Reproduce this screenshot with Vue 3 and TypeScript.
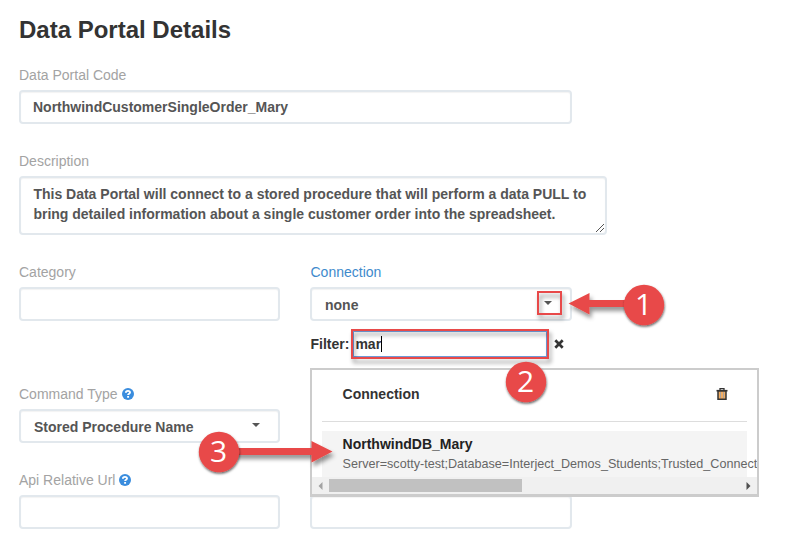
<script setup lang="ts">
import { ref } from 'vue'

interface Connection {
  name: string
  details: string
}

interface Marker {
  label: string
  x: number
  y: number
}

const code = ref('NorthwindCustomerSingleOrder_Mary')
const description = [
  'This Data Portal will connect to a stored procedure that will perform a data PULL to',
  'bring detailed information about a single customer order into the spreadsheet.',
]
const filter = ref('mar')
const connections: Connection[] = [
  {
    name: 'NorthwindDB_Mary',
    details: 'Server=scotty-test;Database=Interject_Demos_Students;Trusted_Connect',
  },
]
const markers: Marker[] = [
  { label: '1', x: 644, y: 305 },
  { label: '2', x: 526, y: 382 },
  { label: '3', x: 219, y: 452 },
]
</script>

<template>
  <main class="page">
    <h1 class="title">Data Portal Details</h1>

    <section class="field code-field">
      <div class="label">Data Portal Code</div>
      <div class="box code-text">{{ code }}</div>
    </section>

    <section class="field description-field">
      <div class="label">Description</div>
      <div class="box area">
        <div v-for="line in description" :key="line" class="line">{{ line }}</div>
        <svg class="grip" width="9" height="9" viewBox="0 0 9 9" shape-rendering="crispEdges">
          <g fill="#555">
            <rect v-for="n in 8" :key="'a' + n" :x="n - 1" :y="8 - n" width="1" height="1" />
            <rect v-for="n in 4" :key="'b' + n" :x="n + 3" :y="8 - n" width="1" height="1" />
          </g>
        </svg>
      </div>
    </section>

    <div class="columns">
      <div class="column left">
        <section class="field category">
          <div class="label">Category</div>
          <div class="box"></div>
        </section>
        <section class="field command">
          <div class="label">
            Command Type
            <svg class="help" viewBox="0 0 12 12"><circle cx="6" cy="6" r="6" fill="#3a8dde" /><path d="M3.900 4.700C3.900 3.300 4.900 2.900 6 2.900S8 3.500 8 4.500C8 5.800 6.100 5.600 6.100 7.100M6.100 8v1.800" fill="none" stroke="#fff" stroke-width="1.900" /></svg>
          </div>
          <div class="box select"><span>Stored Procedure Name</span><i class="caret"></i></div>
        </section>
        <section class="field">
          <div class="label">
            Api Relative Url
            <svg class="help" viewBox="0 0 12 12"><circle cx="6" cy="6" r="6" fill="#3a8dde" /><path d="M3.900 4.700C3.900 3.300 4.900 2.900 6 2.900S8 3.500 8 4.500C8 5.800 6.100 5.600 6.100 7.100M6.100 8v1.800" fill="none" stroke="#fff" stroke-width="1.900" /></svg>
          </div>
          <div class="box"></div>
        </section>
      </div>

      <div class="column right">
        <section class="field">
          <div class="label link">Connection</div>
          <div class="box select"><span>none</span><i class="caret"></i></div>
        </section>
        <div class="filter">
          <span>Filter:</span>
          <div class="filter-input">{{ filter }}<i class="cursor"></i></div>
          <svg class="clear" width="10" height="10" viewBox="0 0 10 10"><path d="M1.300 1.300L8.700 8.700M8.700 1.300L1.300 8.700" stroke="#333" stroke-width="2.700" /></svg>
        </div>
        <div class="box under"></div>

        <div class="popup">
          <div class="popup-head">
            <span>Connection</span>
            <svg width="12" height="12" viewBox="0 0 12 12">
              <path d="M4 2V.7h4V2" fill="none" stroke="#333" stroke-width="1.300" />
              <path d="M.5 1.900h11v1.600H.5z" fill="#333" />
              <path d="M2 3h8v8.200H2z" fill="#f1ad63" stroke="#333" stroke-width="1.500" />
              <path d="M4.500 4v6M7.500 4v6" stroke="#9aa0a8" stroke-width=".8" />
            </svg>
          </div>
          <div v-for="item in connections" :key="item.name" class="option">
            <div class="option-name">{{ item.name }}</div>
            <div class="option-details">{{ item.details }}</div>
          </div>
          <div class="scrollbar">
            <svg width="5" height="8" viewBox="0 0 5 8"><path d="M4.500 0v8L.5 4z" fill="#a3a3a3" /></svg>
            <div class="track"><div class="thumb"></div></div>
            <svg width="5" height="8" viewBox="0 0 5 8"><path d="M.5 0v8l4-4z" fill="#505050" /></svg>
          </div>
        </div>
      </div>
    </div>

    <svg class="callouts" width="791" height="552" viewBox="0 0 791 552">
      <defs>
        <filter id="soft" filterUnits="userSpaceOnUse" x="0" y="0" width="791" height="552">
          <feDropShadow dx="2" dy="4" stdDeviation="2" flood-color="#000" flood-opacity=".42" />
        </filter>
        <filter id="disc" filterUnits="userSpaceOnUse" x="0" y="0" width="791" height="552">
          <feDropShadow dx="0.5" dy="1.500" stdDeviation="1.200" flood-color="#000" flood-opacity=".6" />
        </filter>
      </defs>
      <g filter="url(#soft)">
        <rect x="538" y="292" width="23" height="22" fill="none" stroke="#e84a48" stroke-width="2" />
        <rect x="352" y="330" width="196" height="28" fill="none" stroke="#e84a48" stroke-width="2" />
        <path d="M568.500 303.500l21-10.500v7h40v7h-40v7.500z" fill="#e84a48" />
        <path d="M332.500 451.500l-21-10.500v7h-80v7h80v7.500z" fill="#e84a48" />
      </g>
      <g v-for="marker in markers" :key="marker.label">
        <circle :cx="marker.x" :cy="marker.y" r="20.200" fill="#e84a48" filter="url(#disc)" />
        <text :x="marker.x - 0.5" :y="marker.y + 10.200" class="number">{{ marker.label }}</text>
      </g>
    </svg>
  </main>
</template>

<style>
body {
  background: #fff;
}
</style>

<style scoped>
.page {
  position: relative;
  box-sizing: border-box;
  width: 791px;
  height: 552px;
  padding: 15px 19px 0;
  overflow: hidden;
  background: #fff;
  color: #333;
  font: 14px/20px "Liberation Sans", Arial, sans-serif;
}
.title {
  margin: 0 0 20px;
  font-size: 24px;
  line-height: 30px;
  font-weight: bold;
}
.label {
  display: flex;
  align-items: center;
  gap: 4px;
  height: 20px;
  margin-bottom: 5px;
  color: #a3a3a3;
}
.link {
  color: #3e8acc;
}
.right .link {
  padding-left: 0.5px;
}
.help {
  width: 12px;
  height: 12px;
}
.box {
  box-sizing: border-box;
  height: 34px;
  padding: 5px 12px;
  border: 2px solid #e2e8ed;
  border-radius: 4px;
  background: #fff;
  color: #555;
  font-weight: bold;
  white-space: nowrap;
  box-shadow: inset 0 1px 1px rgba(0, 0, 0, 0.05);
}
.code-field {
  width: 553px;
  margin-bottom: 27px;
}
.description-field {
  width: 588px;
  margin-bottom: 27px;
}
.area {
  position: relative;
  height: 59px;
  padding-top: 6px;
}
.line {
  padding-left: 0.4px;
}
.grip {
  position: absolute;
  right: 0;
  bottom: 0;
}
.columns {
  display: grid;
  grid-template-columns: 261px 262px;
  gap: 30px;
}
.category {
  margin-bottom: 63px;
}
.command {
  margin-bottom: 27px;
}
.select {
  display: flex;
  justify-content: space-between;
  padding: 6px 18px 4px 13px;
}
.caret {
  width: 0;
  height: 0;
  margin-top: 6px;
  border: 4px solid transparent;
  border-top-color: #555;
  border-bottom: 0;
}
.right {
  position: relative;
}
.filter {
  display: flex;
  align-items: center;
  height: 30px;
  margin-top: 8px;
  padding-left: 0.5px;
  font-weight: bold;
}
.filter-input {
  display: flex;
  align-items: center;
  box-sizing: border-box;
  width: 194px;
  height: 26px;
  margin: 0 7px 0 3.500px;
  padding-left: 1.500px;
  border: 1px solid #6f9bd8;
}
.cursor {
  width: 1px;
  height: 16px;
  background: #000;
}
.under {
  margin-top: 136px;
}
.popup {
  position: absolute;
  top: 106px;
  left: 0;
  box-sizing: border-box;
  width: 449px;
  height: 129px;
  border: 2px solid #ccc;
  border-bottom-width: 3px;
  overflow: hidden;
  background: #fff;
}
.popup-head {
  display: flex;
  align-items: center;
  justify-content: space-between;
  box-sizing: border-box;
  height: 52px;
  margin: 0 10px;
  padding: 0 19px 3px 20.600px;
  border-bottom: 1px solid #ddd;
  font-weight: bold;
}
.option {
  box-sizing: border-box;
  height: 46px;
  margin: 9px 10px 0;
  padding: 3px 0 0 20.600px;
  background: #f4f4f4;
  white-space: nowrap;
}
.option-name {
  color: #222;
  font-weight: bold;
}
.option-details {
  color: #666;
  font-size: 12.600px;
}
.scrollbar {
  position: relative;
  display: flex;
  align-items: center;
  justify-content: space-between;
  height: 17px;
  padding: 0 6px;
  background: #f0f0f0;
}
.track {
  flex: 1;
  margin: 0 6px;
}
.thumb {
  width: 193px;
  height: 13px;
  background: #c1c1c1;
}
.callouts {
  position: absolute;
  top: 0;
  left: 0;
}
.number {
  fill: #fff;
  font: 30px "Open Sans", sans-serif;
  text-anchor: middle;
}
</style>
